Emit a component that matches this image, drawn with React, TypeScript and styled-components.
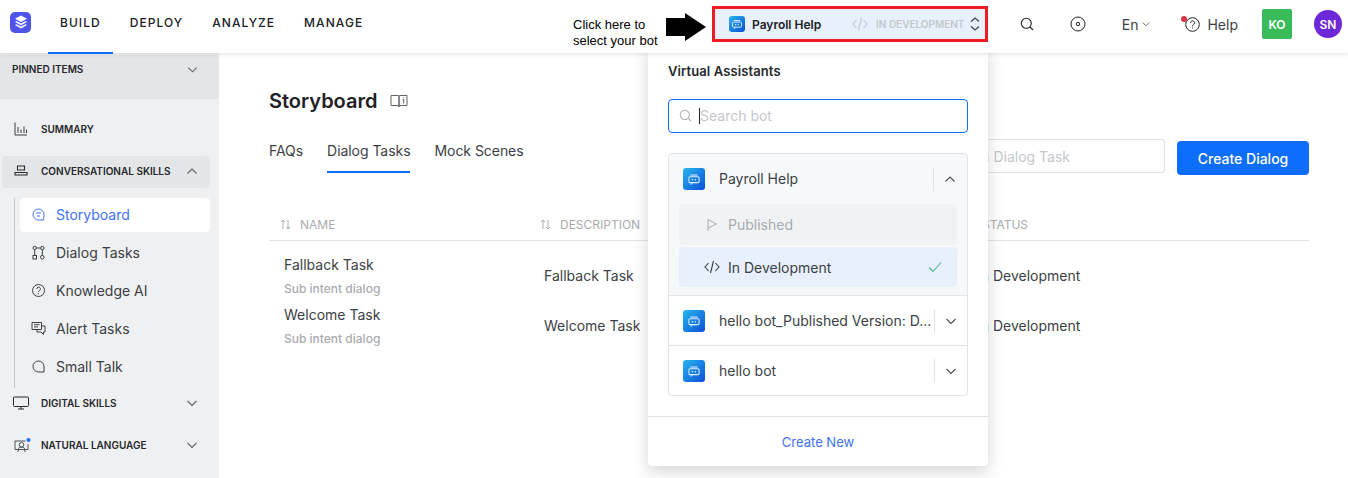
import React from "react";
import styled, { createGlobalStyle } from "styled-components";

const Global = createGlobalStyle`
  html, body { margin: 0; padding: 0; height: 478px; overflow: hidden; background: #fff; }
  #root { height: 478px; }
  * { box-sizing: border-box; }
  body { font-family: Inter, "Noto Sans", sans-serif; color: #202124; }
`;

const Page = styled.div`position: relative; width: 1348px; height: 478px; overflow: hidden; display: flex; flex-direction: column;`;
const Header = styled.header`
  position: relative; z-index: 2; flex: 0 0 53px; height: 53px; display: flex; align-items: stretch; background: #fff;
  box-shadow: 0 1px 4px rgba(32,33,36,.14);
`;
const Logo = styled.div`
  width: 21px; height: 21px; margin: 12px 0 0 10px; border-radius: 5px; background: #4f55e8;
  display: flex; align-items: center; justify-content: center;
`;
const Nav = styled.nav`display: flex; gap: 5px; margin-left: 17px;`;
const NavItem = styled.a<{ $active?: boolean }>`
  display: block; height: 54px; padding: 15px 12px 0; font-size: 12px; line-height: 15px; font-weight: 500; letter-spacing: 1.05px; color: #202124;
  border-bottom: 2px solid ${p => (p.$active ? "#0d6efd" : "transparent")};
`;
const BotSwitch = styled.div`
  position: absolute; left: 712px; top: 6px; width: 276px; height: 36px; border: 3px solid #ed1c24; background: #e7f0fc;
  display: flex; align-items: center; padding-left: 14px;
`;
const BotName = styled.span`margin-left: 7px; font-size: 12px; font-weight: 600; color: #202124; width: 100px;`;
const StateText = styled.span`margin-left: 8px; font-size: 10px; font-weight: 600; color: #c5c7cc; width: 94px; white-space: nowrap;`;
const Tools = styled.div`margin-left: auto; display: flex; align-items: center; height: 48px; color: #202124;`;
const ToolIcon = styled.span<{ $w: number; $ml?: number }>`display: flex; justify-content: center; width: ${p => p.$w}px; margin-left: ${p => p.$ml ?? 0}px;`;
const Lang = styled.span`display: flex; align-items: center; gap: 3px; font-size: 14px; margin-left: 36px; color: #3c3f45;`;
const HelpWrap = styled.span`position: relative; display: flex; align-items: center; gap: 7px; font-size: 14px; margin-left: 34px; color: #3c3f45;`;
const RedDot = styled.i`position: absolute; left: -4px; top: 0; width: 6px; height: 6px; border-radius: 50%; background: #dc3545;`;
const KO = styled.span`
  width: 30px; height: 30px; margin-left: 24px; background: #3abb5a; border-radius: 2px; color: #fff; font-size: 12px; font-weight: 600;
  display: flex; align-items: center; justify-content: center;
`;
const SN = styled.span`
  width: 28px; height: 28px; margin: 0 6px 0 22px; background: #6d28d9; border-radius: 50%; color: #fff; font-size: 12px; font-weight: 600;
  display: flex; align-items: center; justify-content: center;
`;
const Callout = styled.div`
  position: absolute; z-index: 3; left: 573px; top: 17px; font: 13px/16px "Liberation Sans", Arial, sans-serif; color: #000;
  margin-left: 0; white-space: nowrap;
`;
const CalloutArrow = styled.svg`position: absolute; z-index: 3; left: 666px; top: 13px;`;

const Body = styled.div`flex: 1; display: flex; min-height: 0;`;
const Sidebar = styled.aside`flex: 0 0 219px; background: #eff0f1; padding-top: 2px;`;
const Pinned = styled.div`
  height: 44px; background: #e4e5e7; border-radius: 0 0 3px 0; padding: 9px 20px 0 12px; display: flex; justify-content: space-between; align-items: flex-start;
`;
const SecLabel = styled.span<{ $ml?: number }>`font-size: 10px; line-height: 11px; font-weight: 600; color: #26282c; margin-left: ${p => p.$ml ?? 0}px;`;
const PinChevron = styled.span`display: flex; margin-top: -1px;`;
const SecRow = styled.div<{ $active?: boolean; $mt: number }>`
  height: 32px; margin: ${p => p.$mt}px 9px 0 2px; padding: 0 11px ${p => (p.$active ? 2 : 0)}px 12px; display: flex; align-items: center; border-radius: 4px;
  background: ${p => (p.$active ? "#e4e5e7" : "transparent")};
`;
const SecIcon = styled.span<{ $ml?: number }>`width: 27px; display: flex; color: #3c3f45; margin-left: ${p => p.$ml ?? 0}px;`;
const SecChevron = styled.span`margin-left: auto; display: flex;`;
const SubList = styled.div`margin: 10px 9px 0 14px; padding-left: 5px; border-left: 1px solid #c5c7cc; height: 190px;`;
const SubItem = styled.div<{ $active?: boolean }>`
  height: 34px; margin-bottom: 4px; padding-bottom: 1px; border-radius: 4px; display: flex; align-items: center; padding-left: 11px; gap: 10px; font-size: 14px;
  background: ${p => (p.$active ? "#fff" : "transparent")}; color: ${p => (p.$active ? "#3f72f5" : "#3c3f45")};
`;

const Main = styled.main`flex: 1; padding: 36px 39px 0 50px; min-width: 0;`;
const TitleRow = styled.div`display: flex; align-items: center; gap: 13px; height: 24px;`;
const Title = styled.h1`margin: 0; font-size: 20px; line-height: 24px; font-weight: 600; color: #202124;`;
const TabBar = styled.div`display: flex; align-items: flex-start; justify-content: space-between; margin-top: 26px; height: 48px;`;
const Tabs = styled.div`display: flex; gap: 24px; padding-top: 2px;`;
const Tab = styled.span<{ $active?: boolean }>`
  height: 32px; font-size: 14px; line-height: 17px; padding-top: 1px; color: #3c3f45; letter-spacing: -.05px;
  border-bottom: 2px solid ${p => (p.$active ? "#0d6efd" : "transparent")};
`;
const Actions = styled.div`display: flex; gap: 12px; margin-top: 2px;`;
const SearchBox = styled.div`
  width: 330px; height: 34px; margin-top: -2px; border: 1px solid #e2e3e5; border-radius: 3px; padding-right: 94px; text-align: right; font-size: 14px; line-height: 33px; color: #c5c7cc; white-space: nowrap;
`;
const CreateBtn = styled.button`
  width: 132px; height: 34px; border: 0; border-radius: 4px; background: #0d6efd; color: #fff; font: 500 14px Inter, sans-serif;
`;
const Grid = styled.div`margin-top: 21px;`;
const HeadRow = styled.div`display: grid; grid-template-columns: 261px 446px 1fr; height: 33px; border-bottom: 1px solid #e2e3e5; padding-top: 9px;`;
const HeadCell = styled.div<{ $pl: number }>`
  display: flex; align-items: center; gap: 9px; height: 15px; padding-left: ${p => p.$pl}px; font-size: 12px; color: #a9abb0;
`;
const Row = styled.div`display: grid; grid-template-columns: 261px 446px 1fr; align-items: center; height: 50px;`;
const NameCell = styled.div`padding-left: 15px;`;
const RowName = styled.div`font-size: 14px; line-height: 17px; color: #3c3f45;`;
const RowSub = styled.div`font-size: 12px; line-height: 15px; margin-top: 8px; color: #a9abb0; font-weight: 500;`;
const PlainCell = styled.div<{ $pl: number }>`padding-left: ${p => p.$pl}px; margin-top: -2px; font-size: 14px; color: #3c3f45; white-space: nowrap;`;
const Rows = styled.div`padding-top: 10px;`;

const Panel = styled.div`
  position: absolute; z-index: 1; left: 648px; top: 43px; width: 340px; height: 423px; background: #fff; border-radius: 0 0 4px 4px;
  box-shadow: 0 6px 16px rgba(32,33,36,.18); display: flex; flex-direction: column;
`;
const PanelTitle = styled.div`margin: 20px 20px 0; font-size: 13px; line-height: 16px; font-weight: 600; color: #26282c; letter-spacing: .1px;`;
const PanelSearch = styled.div`
  margin: 20px 20px 0; height: 34px; border: 1px solid #0d6efd; border-radius: 4px; display: flex; align-items: center; padding: 0 0 1px 10px; gap: 7px; font-size: 14px; color: #c5c7cc;
`;
const Caret = styled.i`width: 1px; height: 16px; background: #202124; margin-right: -7px;`;
const BotList = styled.div`margin: 20px 20px 0; height: 243px; border: 1px solid #e2e3e5; border-radius: 4px;`;
const BotGroup = styled.div`background: #f7f8fa; height: 142px; border-bottom: 1px solid #e2e3e5; padding: 0 10px; border-radius: 4px 4px 0 0;`;
const BotRow = styled.div<{ $last?: boolean; $inner?: boolean }>`
  display: flex; align-items: center; height: 50px;
  ${p => (p.$inner ? "padding-left: 4px;" : "padding-left: 14px;")}
  ${p => (p.$inner || p.$last ? "" : "border-bottom: 1px solid #e2e3e5;")}
`;
const BotIconBox = styled.span<{ $s: number }>`
  flex: 0 0 ${p => p.$s}px; width: ${p => p.$s}px; height: ${p => p.$s}px; border-radius: 3px; display: flex; align-items: center; justify-content: center;
  background: linear-gradient(135deg, #29b6ee, #0a4fd8);
`;
const BotLabel = styled.span`
  margin-left: 14px; width: 215px; padding-bottom: 1px; font-size: 14px; color: #3c3f45; white-space: nowrap;
`;
const BotDivider = styled.i`flex: 0 0 1px; height: 24px; background: #e2e3e5;`;
const BotChevron = styled.span`margin-left: 9px; display: flex;`;
const Version = styled.div<{ $active?: boolean }>`
  height: ${p => (p.$active ? 40 : 41)}px; margin-bottom: ${p => (p.$active ? 0 : 2)}px; border-radius: 4px; display: flex; align-items: center; padding: 0 15px 0 25px; gap: 8px; font-size: 14px;
  background: ${p => (p.$active ? "#e7f0fc" : "#f1f2f4")}; color: ${p => (p.$active ? "#3c3f45" : "#a9abb0")};
`;
const VersionIcon = styled.span`width: 16px; display: flex; justify-content: center;`;
const Check = styled.span`margin-left: auto; display: flex;`;
const PanelFoot = styled.div`
  margin-top: 20px; flex: 1; border-top: 1px solid #e2e3e5; display: flex; align-items: center; justify-content: center; font-size: 13px; color: #3f72f5;
`;

const Chev = ({ up, size = 14, color = "#5f6368" }: { up?: boolean; size?: number; color?: string }) => (
  <svg width={size} height={size} viewBox="0 0 14 14" fill="none" stroke={color} strokeWidth="1.1">
    <path d={up ? "M2.5 9.5 7 5l4.5 4.5" : "M2.5 5 7 9.5 11.5 5"} />
  </svg>
);

const BotGlyph = ({ s = 16 }: { s?: number }) => (
  <svg width={s} height={s} viewBox="0 0 22 22" fill="none">
    <rect x="4" y="8" width="14" height="8" rx="1.5" stroke="#dbeafe" strokeWidth="1.5" />
    <path d="M6 5.5h10" stroke="#dbeafe" strokeWidth="1.5" />
    <circle cx="9" cy="12" r="1" fill="#fff" />
    <circle cx="13" cy="12" r="1" fill="#fff" />
    <path d="M7 16v2.5l2.5-2.5" stroke="#dbeafe" strokeWidth="1.2" />
  </svg>
);

const Sort = () => (
  <svg width="11" height="11" viewBox="0 0 11 11" fill="none" stroke="#a9abb0" strokeWidth="1">
    <path d="M3 10V1M1 3l2-2 2 2M8 1v9M6 8l2 2 2-2" />
  </svg>
);

const Code = ({ color, size = 16 }: { color: string; size?: number }) => (
  <svg width={size} height={size} viewBox="0 0 16 16" fill="none" stroke={color} strokeWidth="1.1">
    <path d="M4.5 4 1 8l3.500 4M11.500 4 15 8l-3.500 4M9.500 2 6.500 14" />
  </svg>
);

const SearchIco = ({ size, color }: { size: number; color: string }) => (
  <svg width={size} height={size} viewBox="0 0 14 14" fill="none" stroke={color} strokeWidth="1.1">
    <circle cx="6.300" cy="6.300" r="5" />
    <path d="m10 10 3 3" />
  </svg>
);

export default function App() {
  return (
    <Page>
      <Global />
      <Header>
        <Logo>
          <svg width="14" height="15" viewBox="0 0 14 15" fill="#fff">
            <path d="M7 .5 13 3.700 7 7 1 3.700z" />
            <path d="M2.500 6 7 8.400 11.500 6 13 6.900 7 10.200 1 6.900z" />
            <path d="M2.500 9.200 7 11.600l4.500-2.400L13 10.100 7 13.400 1 10.100z" />
          </svg>
        </Logo>
        <Nav>
          <NavItem $active>BUILD</NavItem>
          <NavItem>DEPLOY</NavItem>
          <NavItem>ANALYZE</NavItem>
          <NavItem>MANAGE</NavItem>
        </Nav>
        <BotSwitch>
          <BotIconBox $s={16}><BotGlyph s={14} /></BotIconBox>
          <BotName>Payroll Help</BotName>
          <Code color="#c5c7cc" />
          <StateText>IN DEVELOPMENT</StateText>
          <svg width="10" height="14" viewBox="0 0 10 14" fill="none" stroke="#3c3f45" strokeWidth="1.100">
            <path d="M1 4.500 5 1l4 3.500M1 9.500 5 13l4-3.500" />
          </svg>
        </BotSwitch>
        <Tools>
          <ToolIcon $w={14}><SearchIco size={14} color="#202124" /></ToolIcon>
          <ToolIcon $w={16} $ml={36}>
            <svg width="16" height="16" viewBox="0 0 16 16" fill="none" stroke="#202124" strokeWidth="1">
              <circle cx="8" cy="8" r="7" />
              <circle cx="8" cy="8" r="1.700" />
            </svg>
          </ToolIcon>
          <Lang>En <Chev size={10} color="#3c3f45" /></Lang>
          <HelpWrap>
            <RedDot />
            <svg width="15" height="15" viewBox="0 0 15 15" fill="none" stroke="#202124" strokeWidth="1">
              <circle cx="7.500" cy="7.500" r="6.800" />
              <path d="M5.500 5.800a2 2 0 1 1 3 1.800c-.7.4-1 .8-1 1.700" />
              <path d="M7.500 10.500v1" />
            </svg>
            Help
          </HelpWrap>
          <KO>KO</KO>
          <SN>SN</SN>
        </Tools>
      </Header>

      <Callout>Click here to<br />select your bot</Callout>
      <CalloutArrow width="40" height="28" viewBox="0 0 40 28">
        <path d="M0 5h19V0l21 14-21 14v-5H0z" fill="#000" />
      </CalloutArrow>

      <Body>
        <Sidebar>
          <Pinned>
            <SecLabel>PINNED ITEMS</SecLabel>
            <PinChevron><Chev size={13} /></PinChevron>
          </Pinned>
          <SecRow $mt={14}>
            <SecIcon>
              <svg width="14" height="14" viewBox="0 0 14 14" fill="none" stroke="#3c3f45" strokeWidth="1">
                <path d="M1 .5v12.500h12M4 11V5M7 11V7.500M10 11V4.500M12.500 11V7.500" />
              </svg>
            </SecIcon>
            <SecLabel>SUMMARY</SecLabel>
          </SecRow>
          <SecRow $active $mt={11}>
            <SecIcon>
              <svg width="14" height="12" viewBox="0 0 14 12" fill="none" stroke="#26282c" strokeWidth="1.100">
                <path d="M3.500 1h7v4h-7zM1 7.500h12V10H1z" />
              </svg>
            </SecIcon>
            <SecLabel>CONVERSATIONAL SKILLS</SecLabel>
            <SecChevron><Chev up size={14} /></SecChevron>
          </SecRow>
          <SubList>
            <SubItem $active>
              <svg width="15" height="15" viewBox="0 0 15 15" fill="none" stroke="#3f72f5" strokeWidth="1">
                <path d="M12.500 13H7.500a5.500 5.500 0 1 1 5.500-5.500c0 2-.3 4-.5 5.500z" />
                <path d="M5.200 6h4.600M6 9h3" />
              </svg>
              Storyboard
            </SubItem>
            <SubItem>
              <svg width="15" height="15" viewBox="0 0 15 15" fill="none" stroke="#3c3f45" strokeWidth="1">
                <circle cx="3.700" cy="3" r="1.700" />
                <circle cx="11.300" cy="3" r="1.700" />
                <rect x="2" y="10.500" width="3.500" height="3.500" />
                <circle cx="11.300" cy="12.200" r="1.800" />
                <path d="M3.700 4.700v5.800M11.300 4.700v5.700M5.400 3h4.200" />
              </svg>
              Dialog Tasks
            </SubItem>
            <SubItem>
              <svg width="15" height="15" viewBox="0 0 15 15" fill="none" stroke="#3c3f45" strokeWidth="1">
                <circle cx="7.500" cy="7.500" r="6" />
                <path d="M5.800 6a1.800 1.800 0 1 1 2.700 1.500c-.7.400-1 .7-1 1.400M7.500 10.300v1" />
              </svg>
              Knowledge AI
            </SubItem>
            <SubItem>
              <svg width="15" height="15" viewBox="0 0 15 15" fill="none" stroke="#3c3f45" strokeWidth="1">
                <path d="M1 1.500h9.500v7H1zM3 3.700h5.500M3 5.900h4M10.500 5h3.500v6h-1.500v2.500L10 11H6V8.500" />
              </svg>
              Alert Tasks
            </SubItem>
            <SubItem>
              <svg width="15" height="15" viewBox="0 0 15 15" fill="none" stroke="#3c3f45" strokeWidth="1">
                <path d="M13 13H7.500a5.500 5.500 0 1 1 5.500-5.500z" />
              </svg>
              Small Talk
            </SubItem>
          </SubList>
          <SecRow $mt={-1}>
            <SecIcon $ml={-1}>
              <svg width="16" height="14" viewBox="0 0 16 14" fill="none" stroke="#26282c" strokeWidth="1">
                <rect x=".5" y="1" width="15" height="9.500" rx="1" />
                <path d="M8 10.500V13M5 13h6" />
              </svg>
            </SecIcon>
            <SecLabel $ml={1}>DIGITAL SKILLS</SecLabel>
            <SecChevron><Chev size={14} /></SecChevron>
          </SecRow>
          <SecRow $mt={10}>
            <SecIcon>
              <svg width="17" height="15" viewBox="0 0 17 15" fill="none" stroke="#3c3f45" strokeWidth=".9">
                <path d="M11.500 3H1v8.500h13V6" />
                <circle cx="7.500" cy="6.800" r="2.300" />
                <path d="M4 11.500c.3-1.600 1.700-2.400 3.500-2.400s3.200.8 3.500 2.400M3.500 14 5 11.500M11.500 14 10 11.500" />
                <circle cx="14.500" cy="2" r="2" fill="#0d6efd" stroke="none" />
              </svg>
            </SecIcon>
            <SecLabel>NATURAL LANGUAGE</SecLabel>
            <SecChevron><Chev size={14} /></SecChevron>
          </SecRow>
        </Sidebar>

        <Main>
          <TitleRow>
            <Title>Storyboard</Title>
            <svg width="18" height="14" viewBox="0 0 18 14" fill="none" stroke="#5f6368" strokeWidth="1">
              <path d="M1 1.500h7c.6 0 1 .4 1 1v10c0-.6-.4-1-1-1H1zM17 1.500h-7c-.6 0-1 .4-1 1v10c0-.6.4-1 1-1h7z" />
              <path d="M12.500 5.500h1.200V9.500M13.500 3.300v.8" />
            </svg>
          </TitleRow>
          <TabBar>
            <Tabs>
              <Tab>FAQs</Tab>
              <Tab $active>Dialog Tasks</Tab>
              <Tab>Mock Scenes</Tab>
            </Tabs>
            <Actions>
              <SearchBox>Search a Dialog Task</SearchBox>
              <CreateBtn>Create Dialog</CreateBtn>
            </Actions>
          </TabBar>
          <Grid>
            <HeadRow>
              <HeadCell $pl={11}><Sort />NAME</HeadCell>
              <HeadCell $pl={10}><Sort />DESCRIPTION</HeadCell>
              <HeadCell $pl={6}>STATUS</HeadCell>
            </HeadRow>
            <Rows>
              <Row>
                <NameCell><RowName>Fallback Task</RowName><RowSub>Sub intent dialog</RowSub></NameCell>
                <PlainCell $pl={14}>Fallback Task</PlainCell>
                <PlainCell $pl={1}>In Development</PlainCell>
              </Row>
              <Row>
                <NameCell><RowName>Welcome Task</RowName><RowSub>Sub intent dialog</RowSub></NameCell>
                <PlainCell $pl={14}>Welcome Task</PlainCell>
                <PlainCell $pl={1}>In Development</PlainCell>
              </Row>
            </Rows>
          </Grid>
        </Main>
      </Body>

      <Panel>
        <PanelTitle>Virtual Assistants</PanelTitle>
        <PanelSearch>
          <SearchIco size={13} color="#a9abb0" />
          <Caret />
          Search bot
        </PanelSearch>
        <BotList>
          <BotGroup>
            <BotRow $inner>
              <BotIconBox $s={22}><BotGlyph /></BotIconBox>
              <BotLabel>Payroll Help</BotLabel>
              <BotDivider />
              <BotChevron><Chev up size={14} color="#4a4d52" /></BotChevron>
            </BotRow>
            <Version>
              <VersionIcon>
                <svg width="12" height="14" viewBox="0 0 12 14" fill="none" stroke="#a9abb0" strokeWidth="1">
                  <path d="M2 13V1.500L10.500 6 2 10" />
                </svg>
              </VersionIcon>
              Published
            </Version>
            <Version $active>
              <VersionIcon><Code color="#3c3f45" /></VersionIcon>
              In Development
              <Check>
                <svg width="14" height="12" viewBox="0 0 14 12" fill="none" stroke="#4cb58f" strokeWidth="1.100">
                  <path d="m1 6.500 4 4L13 1.500" />
                </svg>
              </Check>
            </Version>
          </BotGroup>
          <BotRow>
            <BotIconBox $s={22}><BotGlyph /></BotIconBox>
            <BotLabel>hello bot_Published Version: D...</BotLabel>
            <BotDivider />
            <BotChevron><Chev size={14} color="#4a4d52" /></BotChevron>
          </BotRow>
          <BotRow $last>
            <BotIconBox $s={22}><BotGlyph /></BotIconBox>
            <BotLabel>hello bot</BotLabel>
            <BotDivider />
            <BotChevron><Chev size={14} color="#4a4d52" /></BotChevron>
          </BotRow>
        </BotList>
        <PanelFoot>Create New</PanelFoot>
      </Panel>
    </Page>
  );
}
